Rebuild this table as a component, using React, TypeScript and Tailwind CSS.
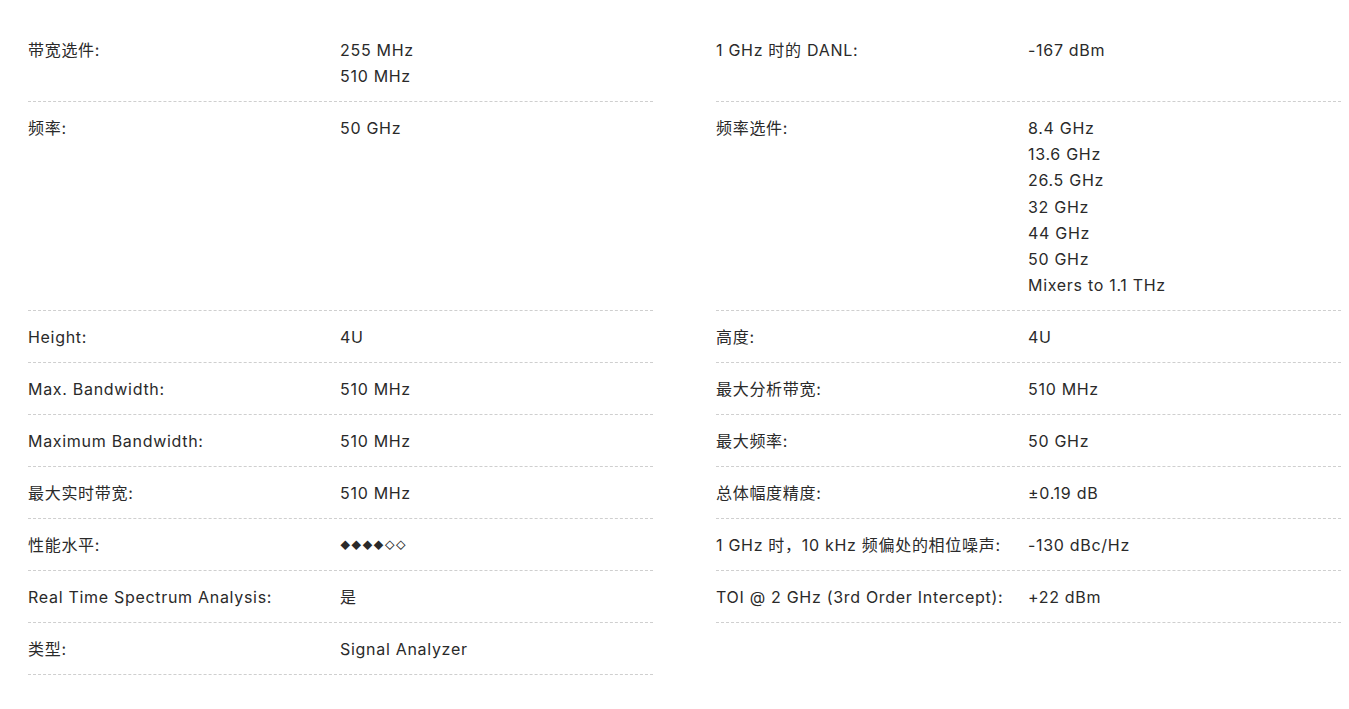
import React from "react";

type Cell = { label: string; values: string[] } | null;

const rows: [Cell, Cell][] = [
  [
    { label: "带宽选件:", values: ["255 MHz", "510 MHz"] },
    { label: "1 GHz 时的 DANL:", values: ["-167 dBm"] },
  ],
  [
    { label: "频率:", values: ["50 GHz"] },
    {
      label: "频率选件:",
      values: ["8.4 GHz", "13.6 GHz", "26.5 GHz", "32 GHz", "44 GHz", "50 GHz", "Mixers to 1.1 THz"],
    },
  ],
  [
    { label: "Height:", values: ["4U"] },
    { label: "高度:", values: ["4U"] },
  ],
  [
    { label: "Max. Bandwidth:", values: ["510 MHz"] },
    { label: "最大分析带宽:", values: ["510 MHz"] },
  ],
  [
    { label: "Maximum Bandwidth:", values: ["510 MHz"] },
    { label: "最大频率:", values: ["50 GHz"] },
  ],
  [
    { label: "最大实时带宽:", values: ["510 MHz"] },
    { label: "总体幅度精度:", values: ["±0.19 dB"] },
  ],
  [
    { label: "性能水平:", values: ["◆◆◆◆◇◇"] },
    { label: "1 GHz 时，10 kHz 频偏处的相位噪声:", values: ["-130 dBc/Hz"] },
  ],
  [
    { label: "Real Time Spectrum Analysis:", values: ["是"] },
    { label: "TOI @ 2 GHz (3rd Order Intercept):", values: ["+22 dBm"] },
  ],
  [{ label: "类型:", values: ["Signal Analyzer"] }, null],
];

function Item({ cell }: { cell: Cell }) {
  if (!cell) return <div />;
  const isDiamond = cell.values[0].startsWith("◆");
  return (
    <div className="flex border-b border-dashed border-[#cfcfcf] pt-[13px] pb-[11.8px]">
      <div className="w-[312px] shrink-0">{cell.label}</div>
      <div className="flex flex-col">
        {cell.values.map((v) => (
          <div key={v} className={isDiamond ? "text-[10px] tracking-[0.6px]" : ""}>
            {v}
          </div>
        ))}
      </div>
    </div>
  );
}

export default function App() {
  return (
    <div
      className="bg-white text-[#2a2a2a] text-[16px] leading-[26.17px] tracking-[0.7px] pl-[28px] pt-[24px] pb-[30px]"
      style={{ fontFamily: 'Inter, "Noto Sans CJK SC", sans-serif' }}
    >
      <div className="grid grid-cols-[625px_625px] gap-x-[63px]">
        {rows.map(([l, r], i) => (
          <React.Fragment key={i}>
            <Item cell={l} />
            <Item cell={r} />
          </React.Fragment>
        ))}
      </div>
    </div>
  );
}
